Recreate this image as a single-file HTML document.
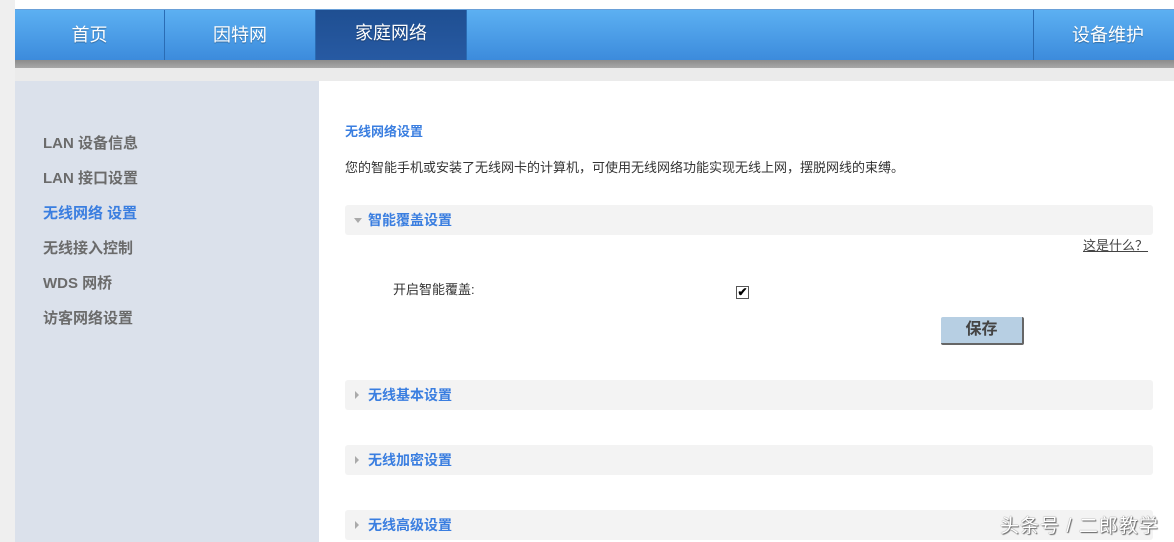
<!DOCTYPE html><html><head><meta charset="utf-8"><style>
*{margin:0;padding:0;box-sizing:border-box}
body{width:1174px;height:542px;overflow:hidden;background:#fff;font-family:"Liberation Sans","Noto Sans CJK SC",sans-serif;position:relative}
.abs{position:absolute}
.nav{left:15px;top:9px;width:1159px;height:51px;background:linear-gradient(#5cb0f2,#3c8bdc);border-top:1px solid #6aa0d8}
.shadow{left:15px;top:60px;width:1159px;height:8px;background:linear-gradient(#8c8c8c,#a8a8a8)}
.ni{top:0;height:51px;line-height:50px;color:#fff;font-size:18px;text-align:center;border-right:1px solid #2a6cb4;text-shadow:0 1px 1px rgba(0,0,0,.3)}
.side{left:15px;top:81px;width:304px;height:461px;background:#dbe1eb}
.sl{left:43px;font-size:15px;color:#6b6b6b;font-weight:bold}
.cont{left:319px;top:86px;width:855px;height:456px;background:#fff}
.bar{left:345px;width:808px;height:30px;background:#f3f3f3;border-radius:3px}
.bt{position:absolute;left:23px;top:6px;font-size:14px;font-weight:bold;color:#3a7ee0}
.tri{position:absolute;left:10px;top:11px;width:0;height:0;border-left:4px solid #aaa;border-top:4px solid transparent;border-bottom:4px solid transparent}
</style></head><body>
<div class="abs" style="left:0;top:0;width:15px;height:542px;background:#efefef"></div>
<div class="abs" style="left:15px;top:68px;width:1159px;height:13px;background:#ebebeb"></div>
<div class="abs nav">
<div class="abs ni" style="left:0;width:150px">首页</div>
<div class="abs ni" style="left:150px;width:151px">因特网</div>
<div class="abs ni" style="left:301px;width:151px;background:linear-gradient(#1f4f92,#275aa3);line-height:47px">家庭网络</div>
<div class="abs ni" style="left:1018px;width:141px;border-right:none;border-left:1px solid #2a6cb4;padding-left:8px">设备维护</div>
</div>
<div class="abs shadow"></div>
<div class="abs side"></div>
<div class="abs sl" style="top:132px">LAN 设备信息</div>
<div class="abs sl" style="top:167px">LAN 接口设置</div>
<div class="abs sl" style="top:202px;color:#3a7ee0">无线网络 设置</div>
<div class="abs sl" style="top:237px">无线接入控制</div>
<div class="abs sl" style="top:272px">WDS 网桥</div>
<div class="abs sl" style="top:307px">访客网络设置</div>
<div class="abs cont"></div>
<div class="abs" style="left:345px;top:121px;font-size:13px;font-weight:bold;color:#3a7ee0">无线网络设置</div>
<div class="abs" style="left:345px;top:157px;font-size:13px;color:#333">您的智能手机或安装了无线网卡的计算机，可使用无线网络功能实现无线上网，摆脱网线的束缚。</div>
<div class="abs bar" style="top:205px"><div style="position:absolute;left:9px;top:13px;border-top:5px solid #aaa;border-left:4px solid transparent;border-right:4px solid transparent"></div><div class="bt" style="top:5px">智能覆盖设置</div></div>
<div class="abs" style="left:1083px;top:235px;font-size:13px;color:#444;text-decoration:underline">这是什么？</div>
<div class="abs" style="left:393px;top:279px;font-size:13px;color:#333">开启智能覆盖:</div>
<div class="abs" style="left:736px;top:286px;width:13px;height:13px;border:1px solid #555;background:#fff;font-size:12px;line-height:11px;text-align:center;font-weight:bold">✔</div>
<div class="abs" style="left:941px;top:317px;width:83px;height:28px;background:#b7cfe3;border-right:2px solid #666;border-bottom:2px solid #666;border-radius:2px;text-align:center;line-height:26px;font-size:16px;font-weight:bold;color:#444">保存</div>
<div class="abs bar" style="top:380px"><div class="tri"></div><div class="bt" style="top:5px">无线基本设置</div></div>
<div class="abs bar" style="top:445px"><div class="tri"></div><div class="bt" style="top:5px">无线加密设置</div></div>
<div class="abs bar" style="top:510px"><div class="tri"></div><div class="bt" style="top:5px">无线高级设置</div></div>
<div class="abs" style="left:1000px;top:511px;font-size:19px;color:#fff;letter-spacing:1px;text-shadow:0 0 1px #555,1px 1px 1px #666">头条号 / 二郎教学</div>
</body></html>
